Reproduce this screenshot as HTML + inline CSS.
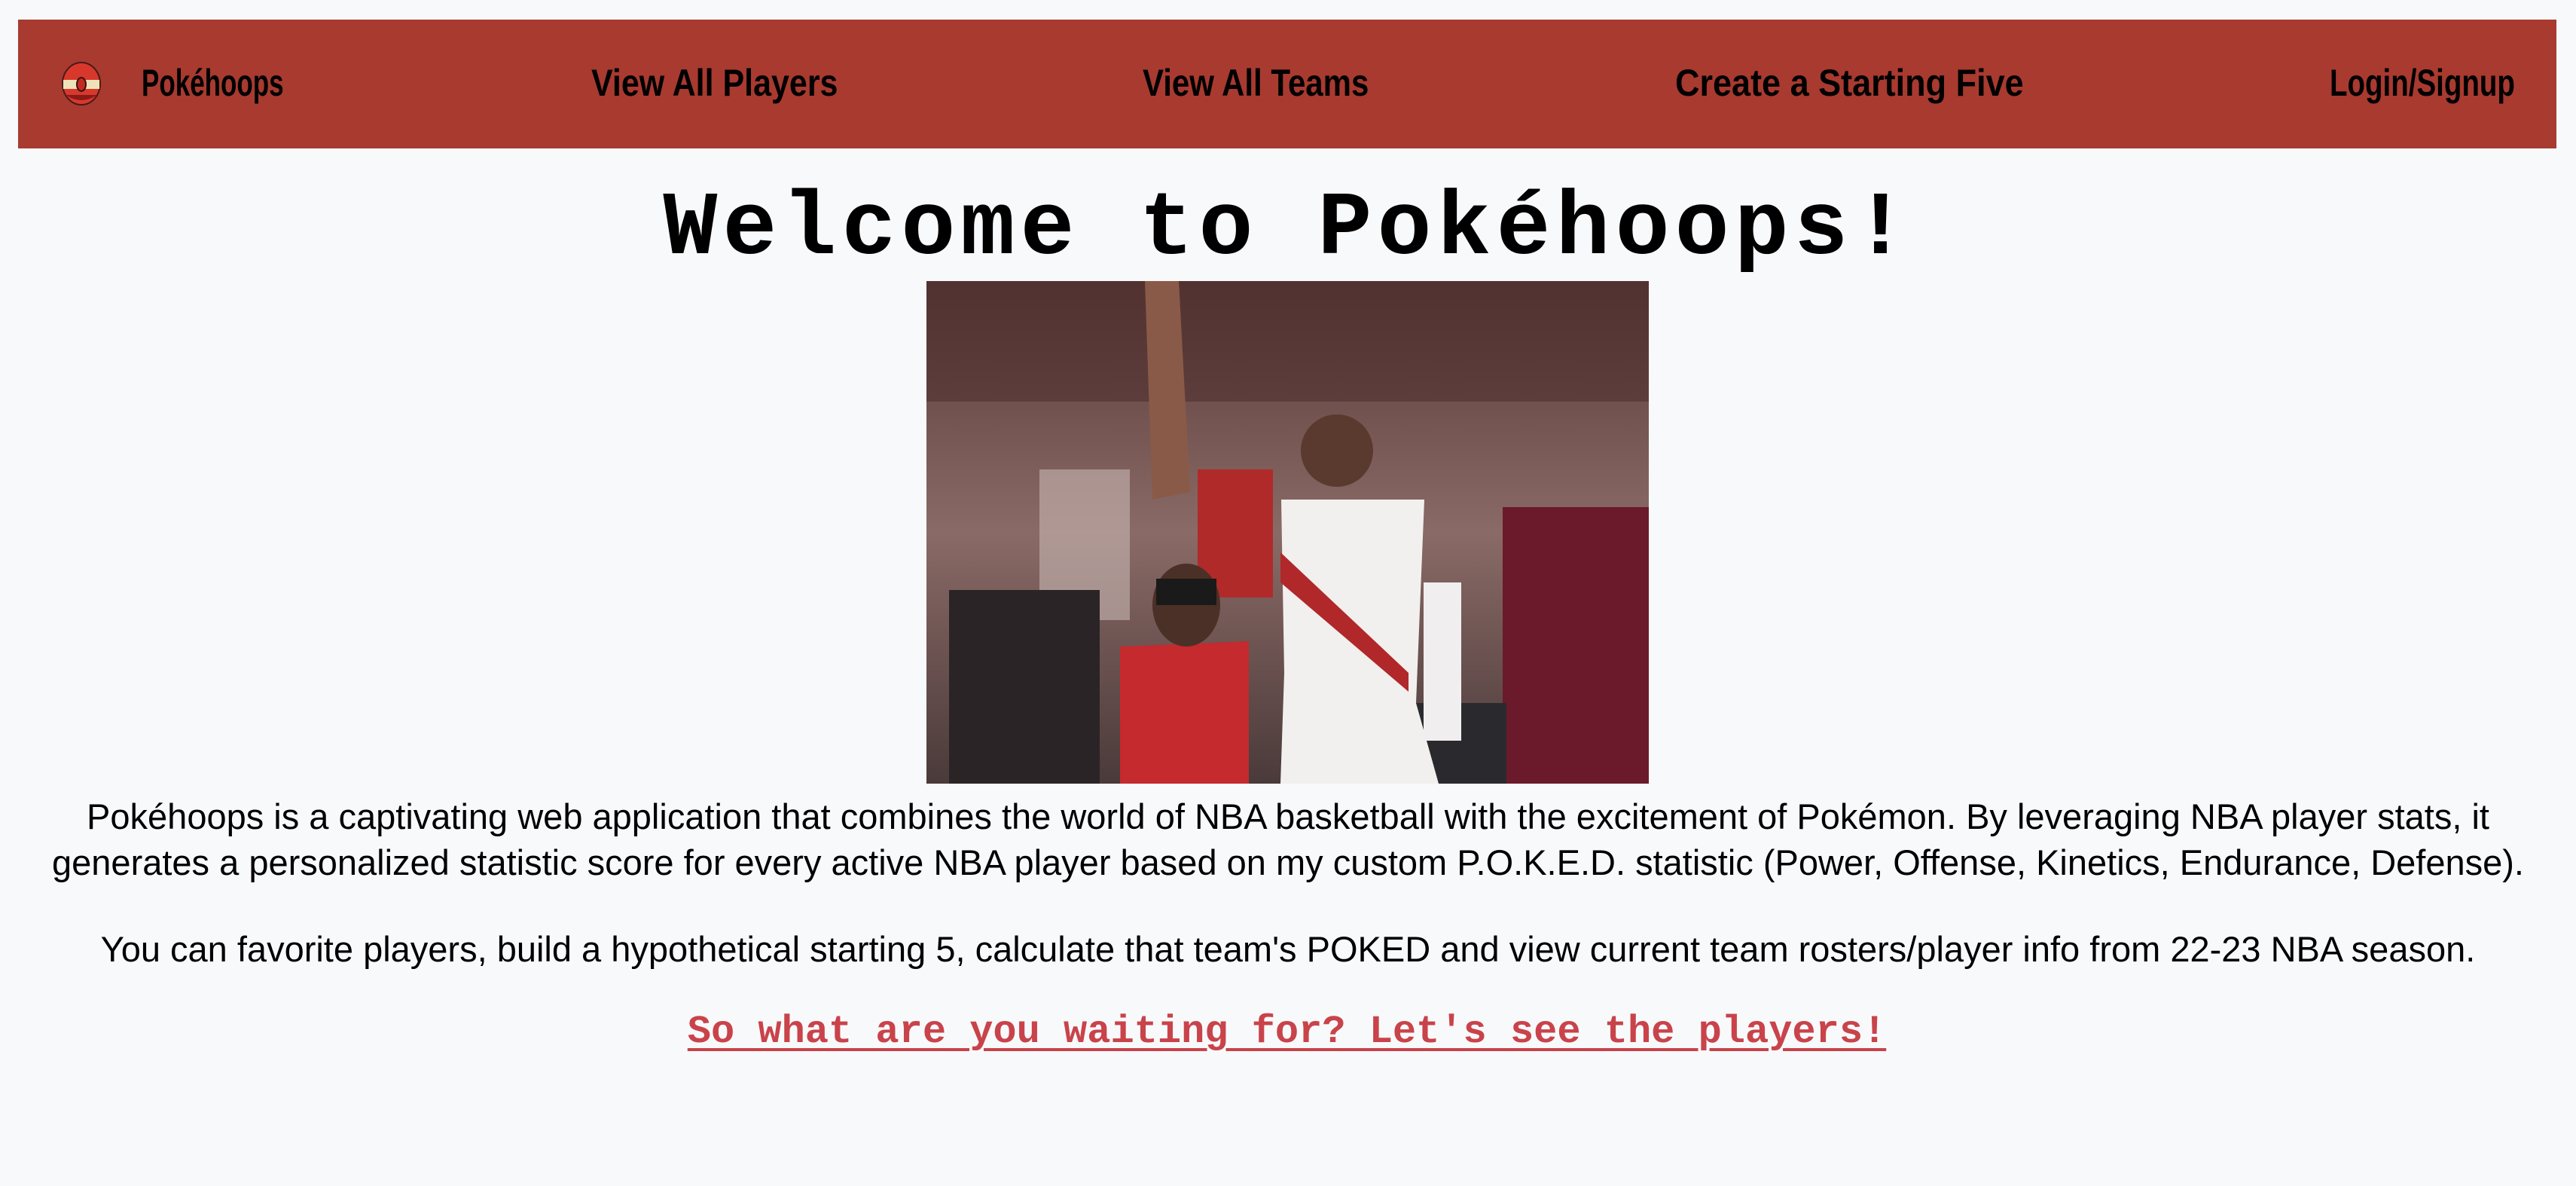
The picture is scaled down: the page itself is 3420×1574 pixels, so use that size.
<!DOCTYPE html>
<html><head><meta charset="utf-8"><style>
html,body{margin:0;padding:0;background:#f8f9fb;width:3420px;height:1574px;overflow:hidden;font-family:"Liberation Sans",sans-serif}
nav{position:absolute;left:24px;top:26px;width:3370px;height:171px;background:#a83a30}
.n{position:absolute;top:56px;font-family:"Liberation Sans",sans-serif;font-weight:bold;font-size:50px;line-height:56px;color:#000;white-space:nowrap;transform-origin:0 50%}
h1{position:absolute;left:0;width:3420px;top:250px;margin:0;text-align:center;font-family:"Liberation Mono",monospace;font-weight:bold;font-size:120px;letter-spacing:7px;line-height:110px}
.img{position:absolute;left:1230px;top:373px;width:959px;height:667px}
p{position:absolute;left:0;width:3420px;text-align:center;margin:0;font-size:47px;line-height:61px;color:#000}
a{position:absolute;left:892px;top:1340px;width:1633px;text-align:center;font-family:"Liberation Mono",monospace;font-size:52px;color:#c9434a;text-decoration:underline;text-decoration-thickness:4px;text-underline-offset:8px;font-weight:bold;white-space:nowrap}
</style></head><body>
<nav>
<svg style="position:absolute;left:57px;top:56px" width="54" height="58" viewBox="0 0 54 58"><ellipse cx="27" cy="29" rx="25" ry="28" fill="#d8382c" stroke="#4a1a18" stroke-width="2"/><path d="M3 24 H51 V36 H3Z" fill="#f0e2b8"/><ellipse cx="27" cy="30" rx="6" ry="9" fill="#c42a22" stroke="#3a1010" stroke-width="2"/><path d="M6 44 Q27 58 48 44" fill="#8a1a18"/></svg>
<div class="n" style="left:164px;transform:scaleX(0.70)">Pokéhoops</div>
<div class="n" style="left:761px;transform:scaleX(0.86)">View All Players</div>
<div class="n" style="left:1493px;transform:scaleX(0.84)">View All Teams</div>
<div class="n" style="left:2200px;transform:scaleX(0.90)">Create a Starting Five</div>
<div class="n" style="left:3069px;transform:scaleX(0.77)">Login/Signup</div>
</nav>
<h1>Welcome to Pokéhoops!</h1>
<svg class="img" viewBox="0 0 959 667" preserveAspectRatio="none">
<defs><linearGradient id="g" x1="0" y1="0" x2="0" y2="1"><stop offset="0" stop-color="#5a3a38"/><stop offset="0.5" stop-color="#8a6a66"/><stop offset="1" stop-color="#4a3a3a"/></linearGradient></defs>
<rect width="959" height="667" fill="url(#g)"/>
<rect x="0" y="0" width="959" height="160" fill="#4a2a2a" opacity="0.5"/>
<rect x="150" y="250" width="120" height="200" fill="#c8b8b4" opacity="0.6"/>
<rect x="30" y="410" width="200" height="257" fill="#2a2426"/>
<rect x="765" y="300" width="194" height="367" fill="#6a1a2a"/>
<rect x="650" y="560" width="120" height="107" fill="#2a2a2e"/>
<rect x="360" y="250" width="100" height="170" fill="#b02a2a"/>
<path d="M290 0 L335 0 L350 280 L300 290Z" fill="#8a5a48"/>
<circle cx="545" cy="225" r="48" fill="#5a3a2e"/>
<path d="M471 290 L661 290 L650 560 L680 667 L470 667 L475 520Z" fill="#f2f0ee"/>
<path d="M470 360 L640 520 L640 545 L470 400Z" fill="#b0282a"/>
<rect x="660" y="400" width="50" height="210" fill="#f0eeee"/>
<path d="M257 485 L428 478 L428 667 L257 667Z" fill="#c42a2e"/>
<ellipse cx="345" cy="430" rx="45" ry="55" fill="#4a3026"/>
<rect x="305" y="395" width="80" height="35" fill="#1a1a1a"/>
</svg>
<p style="top:1053px">Pokéhoops is a captivating web application that combines the world of NBA basketball with the excitement of Pokémon. By leveraging NBA player stats, it<br>generates a personalized statistic score for every active NBA player based on my custom P.O.K.E.D. statistic (Power, Offense, Kinetics, Endurance, Defense).</p>
<p style="top:1229px">You can favorite players, build a hypothetical starting 5, calculate that team's POKED and view current team rosters/player info from 22-23 NBA season.</p>
<a>So what are you waiting for? Let's see the players!</a>
</body></html>
